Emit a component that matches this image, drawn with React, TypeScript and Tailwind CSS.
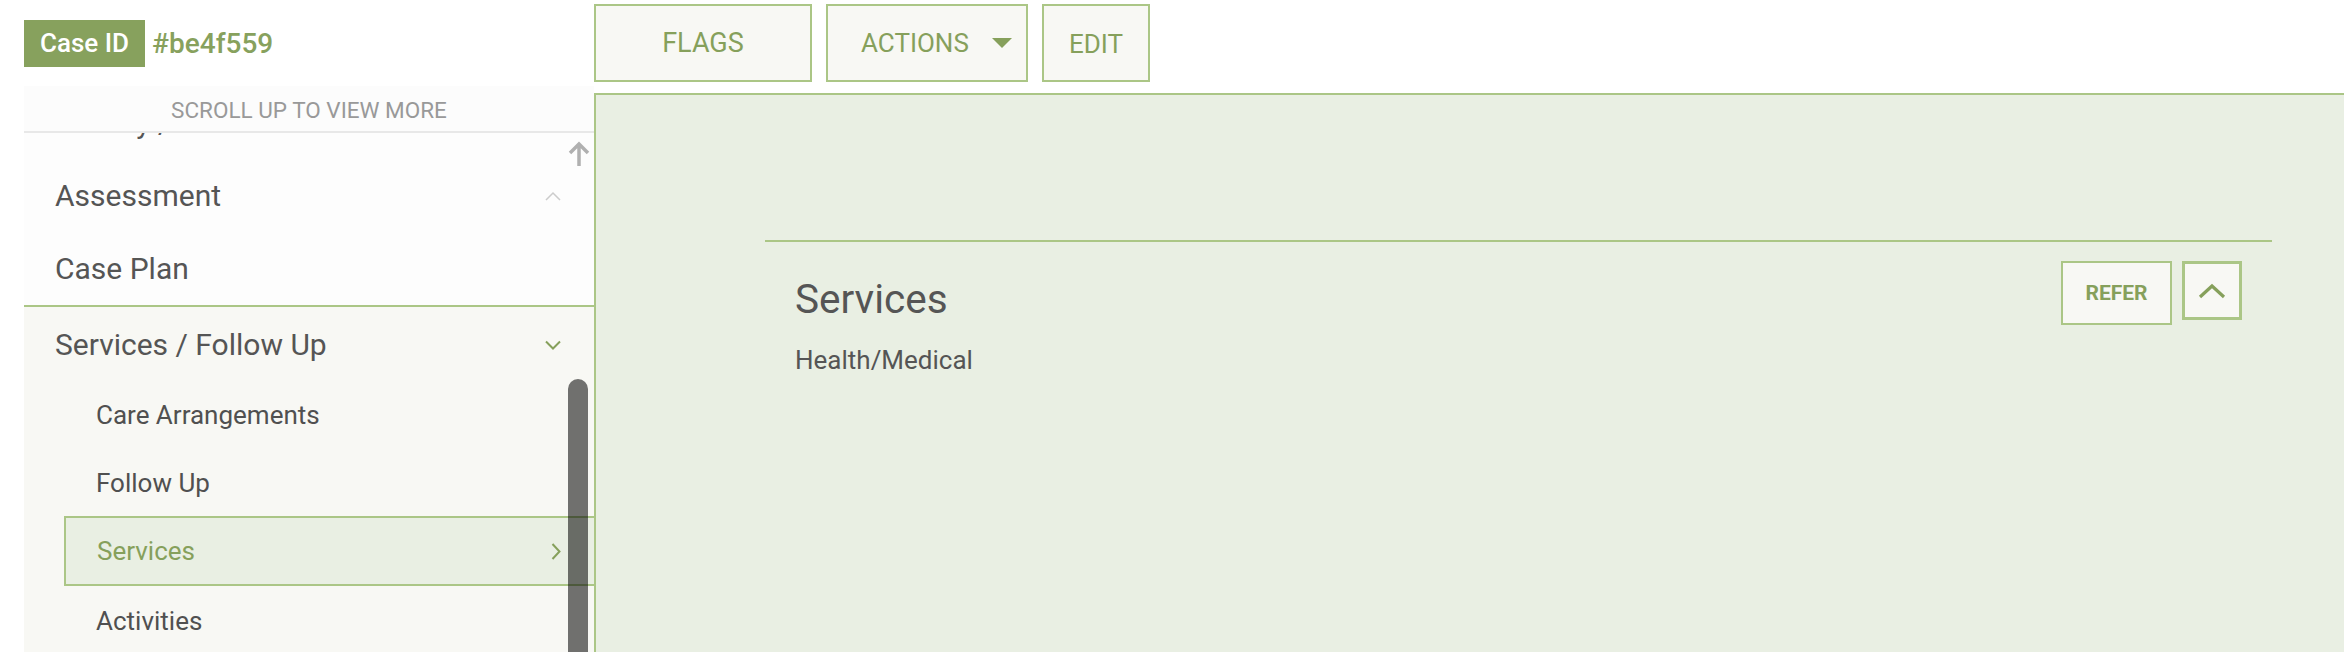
import React from 'react';

const ChevronUpIcon = ({ className }: { className?: string }) => (
  <svg className={className} width="16" height="10" viewBox="0 0 16 10" fill="none">
    <path d="M1 9 L8 2 L15 9" stroke="currentColor" strokeWidth="1.5" />
  </svg>
);

const ChevronDownIcon = ({ className }: { className?: string }) => (
  <svg className={className} width="16" height="10" viewBox="0 0 16 10" fill="none">
    <path d="M1 1.5 L8 8.5 L15 1.5" stroke="currentColor" strokeWidth="2" />
  </svg>
);

const ChevronRightIcon = ({ className }: { className?: string }) => (
  <svg className={className} width="10" height="17" viewBox="0 0 10 17" fill="none">
    <path d="M1.5 1 L8.5 8.5 L1.5 16" stroke="currentColor" strokeWidth="2" />
  </svg>
);

const topLevel = ['History / Intake', 'Assessment', 'Case Plan'];
const subItems = ['Care Arrangements', 'Follow Up', 'Services', 'Activities'];

const App: React.FC = () => {
  return (
    <div className="w-[2344px] h-[652px] overflow-hidden bg-white flex font-['Roboto',sans-serif]">
      {/* sidebar */}
      <div className="w-[594px] shrink-0 pl-[24px] flex flex-col h-full">
        <div className="h-[86px] pt-[20px] shrink-0">
          <div className="flex items-center gap-[7px]">
            <span className="h-[47px] px-[16px] bg-[#87a15d] text-white text-[26px] font-medium flex items-center">
              Case ID
            </span>
            <span className="text-[28px] font-medium text-[#87a15d]">#be4f559</span>
          </div>
        </div>
        <div className="h-[47px] shrink-0 bg-[#fcfcfc] border-b-2 border-[#e8e8e8] flex items-center justify-center pt-[5px] text-[22.5px] text-[#999999]">
          SCROLL UP TO VIEW MORE
        </div>
        <div className="relative flex-1 overflow-hidden bg-[#fdfdfd]">
          <div className="-mt-[47px]">
            {topLevel.map((label, i) => (
              <div key={label} className="h-[73px] flex items-center justify-between pl-[31px] pr-[33px] text-[30px] text-[#555555]">
                <span>{label}</span>
                {i === 1 && <ChevronUpIcon className="text-[#cccccc]" />}
              </div>
            ))}
            <div className="border-t-2 border-[#abc686] bg-[#f8f8f4]">
              <div className="h-[73px] flex items-center justify-between pl-[31px] pr-[33px] pt-[2px] text-[30px] text-[#555555]">
                <span>Services / Follow Up</span>
                <ChevronDownIcon className="text-[#86a05b]" />
              </div>
              {subItems.map((label) =>
                label === 'Services' ? (
                  <div key={label} className="ml-[40px] h-[70px] border-l-2 border-y-2 border-[#abc686] bg-[#e9efe3] flex items-center justify-between pl-[31px] pr-[33px] text-[26px] text-[#86a05b]">
                    <span>{label}</span>
                    <ChevronRightIcon className="text-[#86a05b]" />
                  </div>
                ) : (
                  <div key={label} className="h-[68px] flex items-center pt-[2px] pl-[72px] text-[26px] text-[#505050]">
                    {label}
                  </div>
                )
              )}
            </div>
          </div>
          {/* scroll hint arrow */}
          <svg className="absolute left-[544px] top-[8px]" width="22" height="25" viewBox="0 0 22 25" fill="none">
            <path d="M11 3 V25 M2 12 L11 3 L20 12" stroke="#b0b0b0" strokeWidth="3.5" />
          </svg>
          {/* scrollbar thumb */}
          <div className="absolute left-[544px] top-[246px] w-[20px] h-[400px] rounded-full bg-black/55" />
        </div>
      </div>

      {/* main */}
      <div className="flex-1 flex flex-col h-full">
        <div className="h-[93px] shrink-0 pt-[4px] flex items-start gap-[14px]">
          <button className="w-[218px] h-[78px] border-2 border-[#abc686] bg-[#f8f8f4] text-[27px] text-[#86a05b] flex items-center justify-center">
            FLAGS
          </button>
          <button className="w-[202px] h-[78px] border-2 border-[#abc686] bg-[#f8f8f4] text-[26px] text-[#86a05b] flex items-center pl-[33px] gap-[23px]">
            <span>ACTIONS</span>
            <svg width="20" height="10" viewBox="0 0 20 10">
              <path d="M0 0 H20 L10 10 Z" fill="#86a05b" />
            </svg>
          </button>
          <button className="w-[108px] h-[78px] border-2 border-[#abc686] bg-[#f8f8f4] text-[26px] text-[#86a05b] flex items-center justify-center pt-[3px]">
            EDIT
          </button>
        </div>
        <div className="flex-1 bg-[#e9efe3] border-l-2 border-t-2 border-[#abc686] pl-[169px] pr-[72px] pt-[145px]">
          <div className="border-t-2 border-[#abc686] pt-[19px] pl-[30px] pr-[30px] flex justify-between items-start">
            <div className="pt-[14px]">
              <h2 className="text-[40.5px] leading-[48px] text-[#555555]">Services</h2>
              <p className="mt-[21px] text-[26px] leading-[32px] text-[#555555]">Health/Medical</p>
            </div>
            <div className="flex items-start gap-[10px]">
              <button className="w-[111px] h-[64px] border-2 border-[#abc686] bg-[#f8f8f4] pt-[2px] text-[21px] font-bold text-[#86a05b] flex items-center justify-center">
                REFER
              </button>
              <button className="w-[60px] h-[59px] border-[3px] border-[#abc686] bg-[#f8f8f4] flex items-center justify-center">
                <svg width="28" height="16" viewBox="0 0 28 16" fill="none">
                  <path d="M2 14 L14 3 L26 14" stroke="#86a05b" strokeWidth="3.2" />
                </svg>
              </button>
            </div>
          </div>
        </div>
      </div>
    </div>
  );
};

export default App;
